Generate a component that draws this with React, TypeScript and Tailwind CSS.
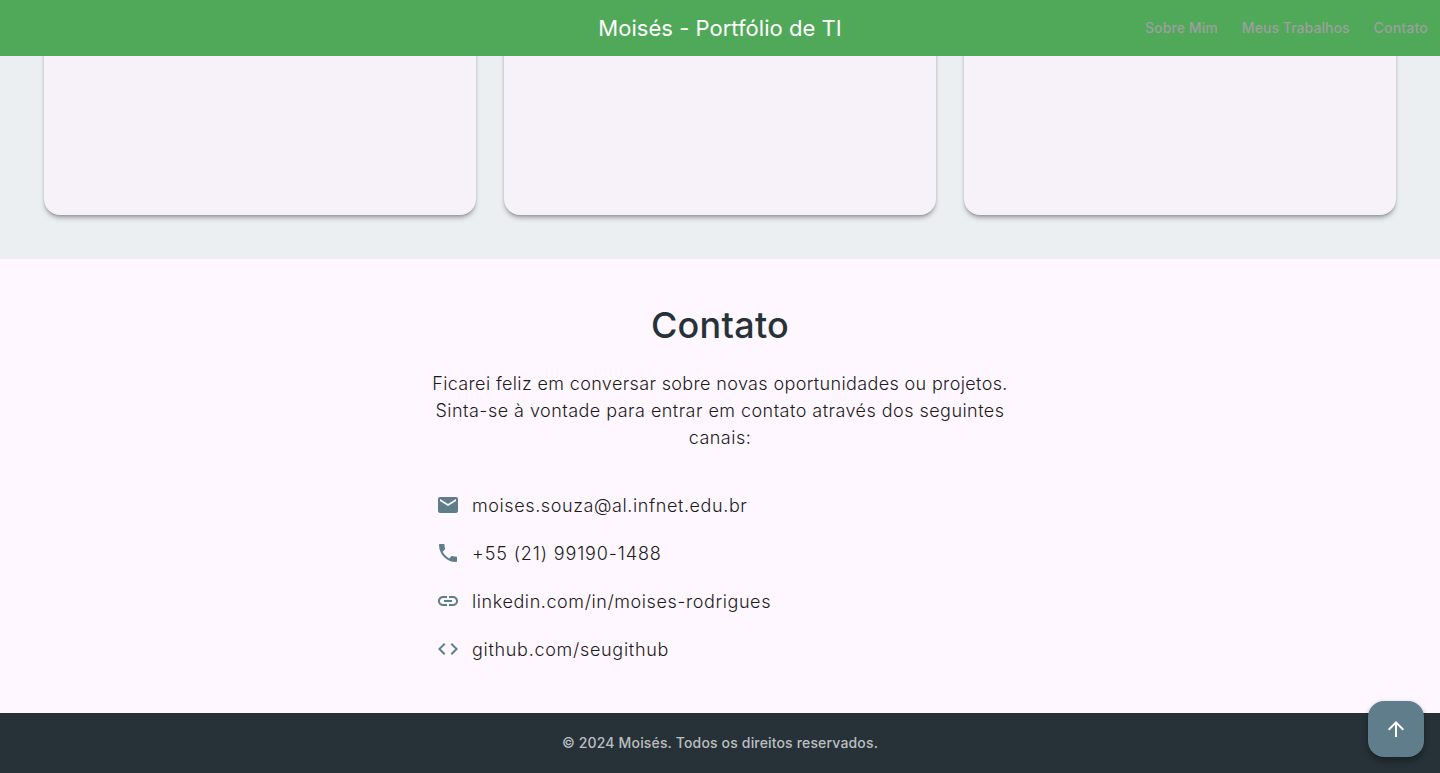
import { MdEmail, MdPhone, MdLink, MdCode, MdArrowUpward } from "react-icons/md";

const contacts = [
  { icon: MdEmail, label: "moises.souza@al.infnet.edu.br", tracking: "tracking-[0.59px]" },
  { icon: MdPhone, label: "+55 (21) 99190-1488", tracking: "tracking-[0.87px]" },
  { icon: MdLink, label: "linkedin.com/in/moises-rodrigues", tracking: "tracking-[0.58px]" },
  { icon: MdCode, label: "github.com/seugithub", tracking: "tracking-[0.7px]" },
];

export default function App() {
  return (
    <div className="relative flex h-[773px] w-full flex-col overflow-hidden bg-[#fef7ff] font-['Inter',sans-serif]">
      <header className="z-10 grid h-14 shrink-0 grid-cols-[1fr_auto_1fr] items-center bg-[#4fa959]">
        <span />
        <h1 className="text-[22px] leading-7 tracking-[0.03px] text-white">Moisés - Portfólio de TI</h1>
        <nav className="flex justify-end gap-6 pr-3 text-sm font-medium tracking-[0.1px] text-[#9e9e9e]">
          <a>Sobre Mim</a>
          <a className="tracking-[0.05px]">Meus Trabalhos</a>
          <a className="tracking-[0.2px]">Contato</a>
        </nav>
      </header>
      <section className="grid h-[203px] shrink-0 grid-cols-3 gap-7 bg-[#ebeff2] px-11 pb-11">
        {[0, 1, 2].map((i) => (
          <div key={i} className="-mt-5 rounded-2xl bg-[#f7f2fa] shadow-[0_4px_5px_-1px_rgba(0,0,0,0.3),0_1px_2px_rgba(0,0,0,0.12)]" />
        ))}
      </section>
      <section className="flex h-[454px] shrink-0 flex-col items-center pt-11">
        <h2 className="text-[36px] leading-11 font-medium tracking-[0.25px] text-[#263238]">Contato</h2>
        <p className="mt-[23px] w-[600px] text-center text-lg leading-[27px] font-light text-[#1d1b20]">
          <span className="block tracking-[0.36px]">Ficarei feliz em conversar sobre novas oportunidades ou projetos.</span>
          <span className="block tracking-[0.46px]">Sinta-se à vontade para entrar em contato através dos seguintes</span>
          <span className="block tracking-[0.5px]">canais:</span>
        </p>
        <ul className="mt-[30px] w-[568px]">
          {contacts.map(({ icon: Icon, label, tracking }) => (
            <li key={label} className="flex h-12 items-center gap-3 text-lg font-light text-[#1d1b20]">
              <Icon size={24} className="text-[#607d8b]" />
              <span className={`pt-0.5 ${tracking}`}>{label}</span>
            </li>
          ))}
        </ul>
      </section>
      <footer className="flex h-[60px] shrink-0 items-center justify-center bg-[#263238] text-sm font-medium tracking-[0.16px] text-white/70">
        © 2024 Moisés. Todos os direitos reservados.
      </footer>
      <button className="absolute right-4 bottom-4 flex size-14 items-center justify-center rounded-2xl bg-[#607d8b] text-white shadow-[0_5px_7px_-1px_rgba(0,0,0,0.3),0_1px_5px_rgba(0,0,0,0.14)]">
        <MdArrowUpward size={24} />
      </button>
    </div>
  );
}
